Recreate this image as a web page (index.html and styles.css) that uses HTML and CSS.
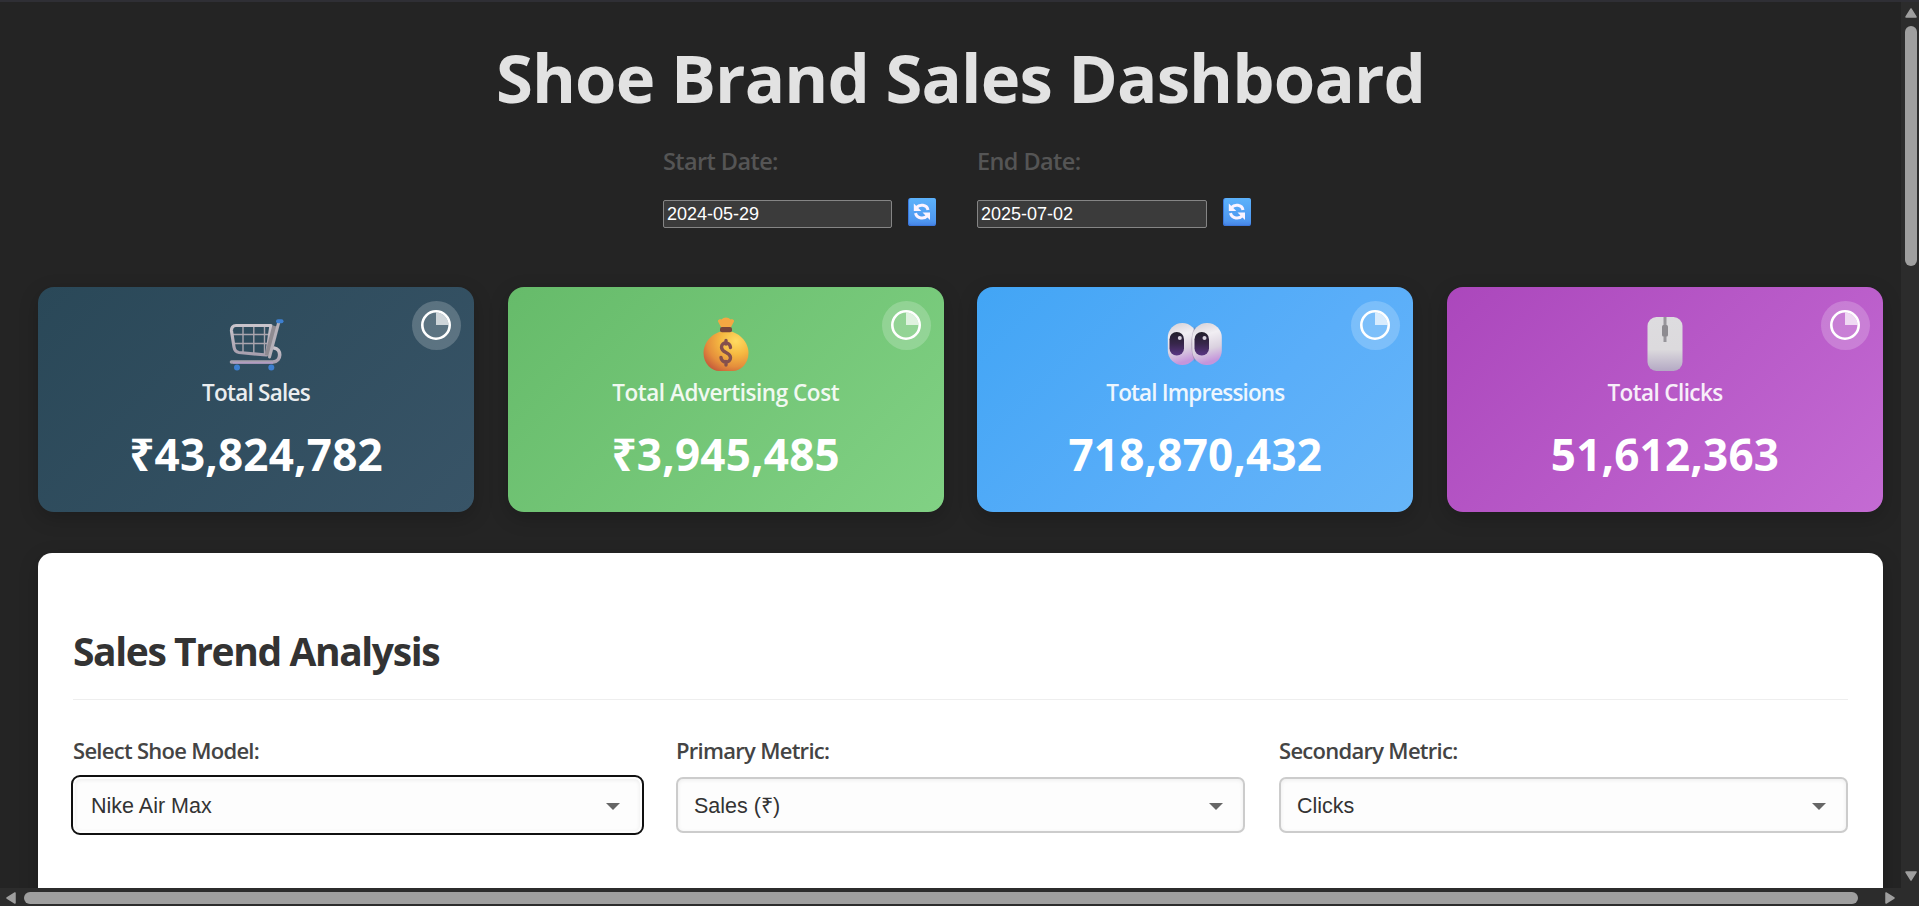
FILE: index.html
```html
<!DOCTYPE html>
<html lang="en">
<head>
<meta charset="utf-8">
<title>Shoe Brand Sales Dashboard</title>
<link rel="stylesheet" href="styles.css">
</head>
<body>
<svg class="defs" width="0" height="0" aria-hidden="true">
  <defs>
    <linearGradient id="steel" x1="0" y1="0" x2="0" y2="1"><stop offset="0" stop-color="#c9c4cb"/><stop offset="1" stop-color="#a79fae"/></linearGradient>
    <radialGradient id="gold" cx=".72" cy=".25" r=".85"><stop offset="0" stop-color="#ffdb62"/><stop offset=".4" stop-color="#f6b941"/><stop offset=".75" stop-color="#e58f3c"/><stop offset="1" stop-color="#c9603b"/></radialGradient>
    <linearGradient id="eye" x1="0" y1="0" x2=".2" y2="1"><stop offset="0" stop-color="#d2ced4"/><stop offset=".35" stop-color="#f1eef3"/><stop offset=".7" stop-color="#dad1df"/><stop offset="1" stop-color="#c595db"/></linearGradient>
    <linearGradient id="pupil" x1="0" y1="0" x2="0" y2="1"><stop offset="0" stop-color="#231f2b"/><stop offset=".5" stop-color="#37264b"/><stop offset="1" stop-color="#5a3584"/></linearGradient>
    <linearGradient id="shell" x1="0" y1="0" x2="0" y2="1"><stop offset="0" stop-color="#dddcdf"/><stop offset=".6" stop-color="#dcdadd"/><stop offset="1" stop-color="#b4a9c4"/></linearGradient>
    <linearGradient id="tile" x1="0" y1="0" x2="0" y2="1"><stop offset="0" stop-color="#5cb2fb"/><stop offset=".85" stop-color="#4e97f0"/><stop offset="1" stop-color="#4785e6"/></linearGradient>
    <symbol id="refresh" viewBox="0 0 28 28">
      <rect x="0" y="0" width="28" height="28" rx="2.6" fill="#3c78dc"/>
      <rect x="1" y="0" width="27" height="27" rx="2.4" fill="url(#tile)"/>
      <path d="M8.500 9.500C11.500 6 18.800 6.300 20 12" fill="none" stroke="#fbf3ff" stroke-width="3"/>
      <path d="M5.800 5.500v7.500h7.500z" fill="#fbf3ff"/>
      <path d="M19.300 17.800C16.300 21.300 9 21 7.500 15.200" fill="none" stroke="#fbf3ff" stroke-width="3"/>
      <path d="M22 22v-7.500h-7.500z" fill="#fbf3ff"/>
    </symbol>
    <symbol id="pie" viewBox="0 0 30 30">
      <path d="M15 15V2.500A12.500 12.500 0 0 1 27.500 15z" fill="#fff" opacity=".7"/>
      <circle cx="15" cy="15" r="13.700" fill="none" stroke="#fff" stroke-width="2.600"/>
    </symbol>
  </defs>
</svg>
<div class="window">
  <div class="topline"></div>
  <div class="middle">
    <main class="viewport">
      <h1 class="title">Shoe Brand Sales Dashboard</h1>
      <div class="dates">
        <div class="date">
          <label class="date-label" for="start">Start Date:</label>
          <div class="date-row"><input class="date-input" id="start" type="text" value="2024-05-29"><svg class="refresh"><use href="#refresh"/></svg></div>
        </div>
        <div class="date">
          <label class="date-label" for="end">End Date:</label>
          <div class="date-row"><input class="date-input wide" id="end" type="text" value="2025-07-02"><svg class="refresh"><use href="#refresh"/></svg></div>
        </div>
      </div>
      <section class="cards">
        <article class="card sales">
          <span class="badge"><svg class="pie"><use href="#pie"/></svg></span>
          <svg class="icon" viewBox="-1 0 56 56">
            <path d="M2.500 45H44C53 44.500 52.500 31.500 45 31" fill="none" stroke="url(#steel)" stroke-width="3.600" stroke-linecap="round"/>
            <path d="M4 45.900H44" stroke="#b59bc9" stroke-width="1.400"/>
            <path d="M14 9V35M24.800 9V37M35.500 9V38M4 17.500H42M5 26.500H40" stroke="#aaa5ae" stroke-width="1.400"/>
            <path d="M7 8.500H42L37.500 38 10 35.500C6.500 35 5.500 33 5 30L2.500 14C2.200 10.500 4 8.500 7 8.500z" fill="none" stroke="url(#steel)" stroke-width="3.200" stroke-linejoin="round"/>
            <path d="M46 9 38.500 38.500" stroke="#8f8b91" stroke-width="5.500"/>
            <path d="M50 4.500 40.500 40" stroke="#b5b0b8" stroke-width="3" stroke-linecap="round"/>
            <rect x="47" y="2.200" width="7.500" height="4" rx="2" fill="#3d7fd0"/>
            <circle cx="8" cy="50.500" r="3" fill="#3d7fd0"/><circle cx="42.300" cy="50.500" r="3" fill="#3d7fd0"/>
          </svg>
          <h2 class="card-label">Total Sales</h2>
          <p class="card-value">₹43,824,782</p>
        </article>
        <article class="card cost">
          <span class="badge"><svg class="pie"><use href="#pie"/></svg></span>
          <svg class="icon" viewBox="0 0 56 56">
            <path d="M24 12 20 4.500C19.500 2.700 22 2 23.500 2.500 25.500-.300 30.500-.300 32.500 2.500 34.500 2 36.500 3 36 4.500L32 12z" fill="#f5a843"/>
            <path d="M28 14C15 14 5.500 25 5.500 36 5.500 47 14 54 21 54H35C42 54 50.500 47 50.500 36 50.500 25 41 14 28 14z" fill="url(#gold)"/>
            <rect x="22" y="10" width="12" height="5.200" rx="2" fill="#79463b"/>
            <path d="M32.500 30.500C32 24.500 23.500 24.500 23.500 30.200 23.500 36.500 32.500 34.500 32.500 40.800 32.500 46.500 23.500 46.500 23 40.500M28 23.500V27M28 44.500V48" fill="none" stroke="#84504d" stroke-width="3.400" stroke-linecap="round"/>
          </svg>
          <h2 class="card-label">Total Advertising Cost</h2>
          <p class="card-value">₹3,945,485</p>
        </article>
        <article class="card impressions">
          <span class="badge"><svg class="pie"><use href="#pie"/></svg></span>
          <svg class="icon" viewBox="0 0 56 56">
            <rect x=".8" y="6" width="29" height="42" rx="14.500" fill="url(#eye)"/>
            <rect x="2.500" y="15" width="14.500" height="23.500" rx="7.200" fill="url(#pupil)"/><circle cx="12.800" cy="21" r="2" fill="#d9d2df"/>
            <path d="M28 9C23 18 23 36 28 45C31 37 31 18 28 9z" fill="#877a91" opacity=".5"/>
            <rect x="25.300" y="6" width="29.500" height="42" rx="14.500" fill="url(#eye)"/>
            <rect x="27.500" y="15" width="14.500" height="23.500" rx="7.200" fill="url(#pupil)"/><circle cx="37.500" cy="21" r="2" fill="#d9d2df"/>
          </svg>
          <h2 class="card-label">Total Impressions</h2>
          <p class="card-value">718,870,432</p>
        </article>
        <article class="card clicks">
          <span class="badge"><svg class="pie"><use href="#pie"/></svg></span>
          <svg class="icon" viewBox="0 0 56 56">
            <rect x="10.500" y="0" width="35" height="54" rx="9" fill="url(#shell)"/>
            <path d="M28 0V25" stroke="#97959a" stroke-width="3"/>
            <rect x="25" y="8" width="6" height="11.500" rx="1.500" fill="#8d8b90"/>
          </svg>
          <h2 class="card-label">Total Clicks</h2>
          <p class="card-value">51,612,363</p>
        </article>
      </section>
      <section class="panel">
        <h2 class="panel-title">Sales Trend Analysis</h2>
        <div class="filters">
          <div class="filter"><span class="filter-label">Select Shoe Model:</span><div class="select focused"><span>Nike Air Max</span><i class="caret"></i></div></div>
          <div class="filter"><span class="filter-label">Primary Metric:</span><div class="select"><span>Sales (₹)</span><i class="caret"></i></div></div>
          <div class="filter"><span class="filter-label">Secondary Metric:</span><div class="select"><span>Clicks</span><i class="caret"></i></div></div>
        </div>
      </section>
    </main>
    <div class="vscroll">
      <svg width="12" height="10" viewBox="0 0 12 10"><path d="M6 1 11 9H1z" class="arrow"/></svg>
      <div class="vthumb"></div>
      <svg width="12" height="10" viewBox="0 0 12 10"><path d="M6 9 11 1H1z" class="arrow"/></svg>
    </div>
  </div>
  <div class="hscroll">
    <svg width="10" height="12" viewBox="0 0 10 12"><path d="M1 6 9 1V11z" class="arrow"/></svg>
    <div class="hthumb"></div>
    <svg width="10" height="12" viewBox="0 0 10 12"><path d="M9 6 1 1V11z" class="arrow"/></svg>
  </div>
</div>
</body>
</html>
```
FILE: styles.css
```css
* { box-sizing: border-box; }
body { margin: 0; background: #242424; font-family: "Open Sans", "Noto Sans", sans-serif; overflow: hidden; }
h1, h2, p { margin: 0; }
svg { display: block; flex: none; }
.defs { position: absolute; }
.window { height: 906px; display: flex; flex-direction: column; }
.topline { height: 2px; background: #2f2f35; }
.middle { flex: 1; min-height: 0; display: flex; }
.viewport { flex: 1; min-width: 0; overflow: hidden; padding: 35px 18px 0 38px; }

.title { height: 80px; line-height: 80px; font-size: 67px; font-weight: 700; letter-spacing: -.87px; color: #e2e2e2; text-align: center; white-space: nowrap; }

.dates { display: flex; gap: 40px; margin: 29px 0 0 625px; }
.date { width: 274px; }
.date-label { display: block; height: 30px; line-height: 30px; font-size: 23.500px; font-weight: 600; letter-spacing: -.6px; color: #555; white-space: nowrap; }
.date-row { display: flex; align-items: flex-start; gap: 16px; margin-top: 22px; }
.date-input { width: 229px; height: 28px; margin: 2px 0 0; padding: 0 3px; border: 1px solid #858585; border-radius: 2px; background: #3b3b3b; color: #fff; font: 18px "Liberation Sans", Arial, sans-serif; }
.wide { width: 230px; }
.refresh { width: 28px; height: 28px; }

.cards { display: grid; grid-template-columns: repeat(4, 1fr); gap: 33.600px; margin-top: 59px; }
.card { position: relative; height: 225px; padding-top: 30px; border-radius: 16px; color: #fff; text-align: center; box-shadow: 0 6px 20px rgba(0, 0, 0, .2); }
.sales { background: linear-gradient(135deg, #2a4858, #385467); }
.cost { background: linear-gradient(135deg, #66bb6a, #81d184); }
.impressions { background: linear-gradient(135deg, #42a5f5, #5aaef9 60%, #66b5f8); }
.clicks { background: linear-gradient(135deg, #ab47bc, #c46bd3); }
.badge { position: absolute; top: 14px; right: 13px; width: 49px; height: 49px; display: grid; place-items: center; border-radius: 50%; background: rgba(255, 255, 255, .2); }
.pie { width: 30px; height: 30px; margin: -1px 1px 0 0; }
.icon { width: 56px; height: 56px; margin: 0 auto; }
.card-label { height: 30px; margin-top: 5px; line-height: 30px; font-size: 22.500px; font-weight: 600; letter-spacing: -.75px; opacity: .9; white-space: nowrap; }
.cost .card-label { letter-spacing: -.46px; }
.impressions .card-label { letter-spacing: -.86px; }
.clicks .card-label { letter-spacing: -.6px; }
.card-value { height: 50px; margin-top: 21px; line-height: 50px; font-size: 44px; font-weight: 700; letter-spacing: .2px; white-space: nowrap; }

.panel { height: 500px; margin-top: 41px; padding: 73px 35px 0; border-radius: 14px; background: #fff; box-shadow: 0 6px 20px rgba(0, 0, 0, .2); }
.panel-title { height: 74px; line-height: 50px; font-size: 39px; font-weight: 700; letter-spacing: -1.4px; color: #333; border-bottom: 1px solid #eee; white-space: nowrap; }
.filters { display: grid; grid-template-columns: repeat(3, 1fr); gap: 34px; margin-top: 35px; }
.filter-label { display: block; height: 30px; line-height: 30px; font-size: 22px; font-weight: 600; letter-spacing: -.72px; color: #444; white-space: nowrap; }
.select { height: 56px; margin-top: 12px; padding: 2px 20px 0 16px; display: flex; align-items: center; justify-content: space-between; border: 2px solid #ccc; border-radius: 7px; background: #fdfdfd; box-shadow: inset 0 1px 4px rgba(0, 0, 0, .07); color: #333; font: 21.500px/26px "Liberation Sans", Arial, sans-serif; }
.select span { height: 26px; }
.focused { border-color: #fdfdfd; outline: 2px solid #101010; outline-offset: .5px; }
.caret { border: 7px solid transparent; border-top-color: #666; border-bottom: 0; }

.vscroll { width: 18px; padding: 6px 2px 7px 4px; display: flex; flex-direction: column; background: #2c2c2c; }
.vthumb { height: 240px; margin: 8px 0 auto; border-radius: 6px; background: #9f9f9f; }
.hscroll { height: 18px; padding: 4px 24px 2px 6px; display: flex; background: #2c2c2c; }
.hthumb { width: 1834px; margin: 0 auto 0 8px; border-radius: 6px; background: #9f9f9f; }
.arrow { fill: #9f9f9f; stroke: #9f9f9f; stroke-width: 1.500; stroke-linejoin: round; }
```
